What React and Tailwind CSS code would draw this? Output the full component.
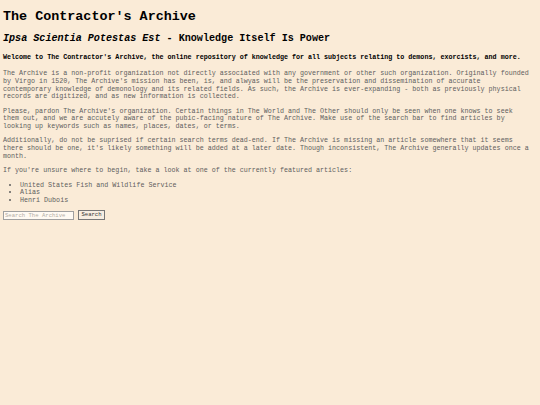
import React, { useState } from "react";

const featured = ["United States Fish and Wildlife Service", "Alias", "Henri Dubois"];

function App() {
  const [query, setQuery] = useState("");

  return (
    <div className="min-h-[405px] bg-[#faebd7] pl-[3px] pr-[11px] pt-[9px] pb-[4px] font-['Liberation_Mono','Courier_New',monospace] text-[6.7px] leading-[7.7px] text-[#5e5e5e]">
      <h1 className="mb-[8.9px] text-[13.4px] leading-[15.3px] font-bold text-black">The Contractor's Archive</h1>

      <h2 className="mb-[8.9px] text-[10.1px] leading-[11.5px] font-bold text-black">
        <i>Ipsa Scientia Potestas Est</i> - Knowledge Itself Is Power
      </h2>

      <h4 className="mb-[8.9px] font-bold text-black">
        Welcome to The Contractor's Archive, the online repository of knowledge for all subjects relating to demons, exorcists, and more.
      </h4>

      <p className="mb-[6.7px]">
        The Archive is a non-profit organization not directly associated with any government or other such organization. Originally founded by Virgo in 1520, The Archive's mission has been, is, and alwyas will be the preservation and dissemination of accurate contemporary knowledge of demonology and its related fields. As such, the Archive is ever-expanding - both as previously physical records are digitized, and as new information is collected.
      </p>

      <p className="mb-[6.7px]">
        Please, pardon The Archive's organization. Certain things in The World and The Other should only be seen when one knows to seek them out, and we are accutely aware of the pubic-facing nature of The Archive. Make use of the search bar to find articles by looking up keywords such as names, places, dates, or terms.
      </p>

      <p className="mb-[6.7px]">
        Additionally, do not be suprised if certain search terms dead-end. If The Archive is missing an article somewhere that it seems there should be one, it's likely something will be added at a later date. Though inconsistent, The Archive generally updates once a month.
      </p>

      <p className="mb-[6.7px]">If you're unsure where to begin, take a look at one of the currently featured articles:</p>

      <ul className="mb-[5.5px] list-disc pl-[17px]">
        {featured.map((title) => (
          <li key={title}>{title}</li>
        ))}
      </ul>

      <form className="flex items-center gap-[4px]" onSubmit={(e) => e.preventDefault()}>
        <input
          type="text"
          value={query}
          onChange={(e) => setQuery(e.target.value)}
          placeholder="Search The Archive"
          className="h-[9px] w-[71px] border border-[#a0a0a0] bg-[#fffaf3] px-[1px] text-[5.6px] leading-none placeholder:text-[#b3ada5]"
        />
        <button
          type="submit"
          className="h-[10px] w-[27px] border border-[#777] bg-[#f7eee2] text-[5.6px] leading-none text-[#333]"
        >
          Search
        </button>
      </form>
    </div>
  );
}

export default App;
